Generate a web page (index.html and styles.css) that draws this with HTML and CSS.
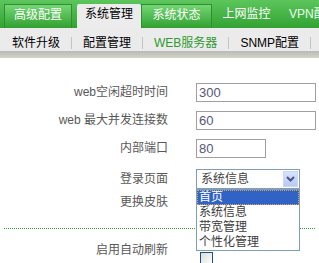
FILE: index.html
```html
<!DOCTYPE html>
<html lang="zh-CN">
<head>
    <meta charset="UTF-8">
    <title>系统管理 - WEB服务器</title>
    <link rel="stylesheet" href="styles.css">
</head>
<body>
    <div class="topnav">
        <a class="tab tab-box tab-first">高级配置</a>
        <a class="tab tab-active">系统管理</a>
        <a class="tab tab-box tab-third">系统状态</a>
        <a class="tab tab-fourth">上网监控</a>
        <span class="tab-sep"></span>
        <a class="tab tab-last">VPN配置</a>
    </div>
    <div class="subnav">
        <a class="sub-item sub-first">软件升级</a>
        <span class="sub-sep"></span>
        <a class="sub-item">配置管理</a>
        <span class="sub-sep"></span>
        <a class="sub-item sub-active">WEB服务器</a>
        <span class="sub-sep"></span>
        <a class="sub-item">SNMP配置</a>
        <span class="sub-sep"></span>
    </div>
    <div class="subnav-shadow"></div>

    <form class="settings">
        <div class="row">
            <label class="row-label">web空闲超时时间</label>
            <input class="field field-long" type="text" value="300">
        </div>
        <div class="row">
            <label class="row-label">web 最大并发连接数</label>
            <input class="field field-long" type="text" value="60">
        </div>
        <div class="row">
            <label class="row-label">内部端口</label>
            <input class="field field-short" type="text" value="80">
        </div>
        <div class="row row-select">
            <label class="row-label">登录页面</label>
            <div class="select">
                <span class="select-value">系统信息</span>
                <span class="select-arrow">
                    <svg width="9" height="6" viewBox="0 0 9 6"><path d="M1 1 L4.5 4.5 L8 1" fill="none" stroke="#4a5680" stroke-width="2"/></svg>
                </span>
                <ul class="select-list">
                    <li class="option option-selected">首页</li>
                    <li class="option">系统信息</li>
                    <li class="option">带宽管理</li>
                    <li class="option">个性化管理</li>
                </ul>
            </div>
        </div>
        <div class="row row-skin">
            <label class="row-label">更换皮肤</label>
        </div>
        <div class="divider"></div>
        <div class="row row-check">
            <label class="row-label">启用自动刷新</label>
            <span class="checkbox"></span>
        </div>
    </form>
</body>
</html>
```

FILE: styles.css
```css
body {
    margin: 0;
    font-family: "Liberation Sans", "Noto Sans CJK SC", sans-serif;
    font-size: 12px;
    background-color: #ffffff;
    overflow: hidden;
}
a {
    text-decoration: none;
}
.topnav {
    display: flex;
    align-items: flex-end;
    height: 28px;
    padding-left: 4px;
    background: linear-gradient(#5cc65c, #32a232);
    overflow: hidden;
}
.tab {
    flex: none;
    box-sizing: border-box;
    height: 24px;
    line-height: 20px;
    padding-bottom: 4px;
    color: #ffffff;
    text-align: center;
    white-space: nowrap;
}
.tab-box {
    background: linear-gradient(#74d674, #30a030);
    border: 1px solid #2f8f2f;
    border-bottom: none;
}
.tab-first {
    width: 68px;
}
.tab-active {
    width: 64px;
    margin-left: 5px;
    background-color: #ececec;
    color: #000000;
    border-radius: 2px 2px 0 0;
}
.tab-third {
    width: 71px;
}
.tab-fourth {
    width: 67px;
    margin-left: 1px;
}
.tab-sep {
    align-self: center;
    width: 1px;
    height: 17px;
    margin-top: 4px;
    background-color: #9ddc9d;
}
.tab-last {
    padding-left: 9px;
    color: #eaffea;
}
.subnav {
    display: flex;
    align-items: center;
    box-sizing: border-box;
    height: 23px;
    padding-top: 6px;
    background-color: #ebebeb;
}
.sub-item {
    padding: 0 11px;
    line-height: 14px;
    color: #000000;
}
.sub-first {
    padding-left: 12px;
}
.sub-active {
    color: #2f9a2f;
}
.sub-sep {
    width: 1px;
    height: 12px;
    background-color: #c4c4c4;
}
.subnav-shadow {
    height: 7px;
    background: linear-gradient(#b9b9b9, #d2d6c4);
}
.settings {
    margin: 0;
    padding-top: 20px;
}
.row {
    display: flex;
    align-items: center;
    height: 28px;
    gap: 28px;
}
.row-label {
    flex: none;
    width: 168px;
    text-align: right;
    color: #585858;
    line-height: 14px;
}
.field {
    box-sizing: border-box;
    height: 19px;
    padding: 0 2px;
    border: 1px solid #a0a0a0;
    font-family: "Liberation Sans", sans-serif;
    font-size: 13px;
    color: #56567a;
    outline: none;
}
.field-long {
    width: 120px;
}
.field-short {
    width: 70px;
}
.row-select {
    height: 30px;
    margin-top: 2px;
}
.select {
    position: relative;
    display: flex;
    align-items: center;
    justify-content: space-between;
    box-sizing: border-box;
    width: 104px;
    height: 20px;
    padding: 0 1px 0 4px;
    border: 1px solid #7f9db9;
    background-color: #ffffff;
}
.select-value {
    color: #444444;
    line-height: 14px;
}
.select-arrow {
    display: flex;
    align-items: center;
    justify-content: center;
    box-sizing: border-box;
    width: 15px;
    height: 16px;
    background: linear-gradient(#d6e2fd, #b7caf6);
    border: 1px solid #c9d6f6;
}
.select-list {
    position: absolute;
    top: 19px;
    left: -1px;
    width: 104px;
    box-sizing: border-box;
    margin: 0;
    padding: 0;
    list-style: none;
    border: 1px solid #7f9db9;
    background-color: #ffffff;
    z-index: 2;
}
.option {
    height: 15px;
    line-height: 15px;
    padding-left: 2px;
    color: #3c3c3c;
}
.option-selected {
    background-color: #3163c6;
    color: #ffffff;
    outline: 1px dotted #d6a35c;
    outline-offset: -1px;
}
.row-skin {
    height: 16px;
}
.divider {
    margin: 18px 4px 0;
    border-top: 1px dotted #2f9a2f;
}
.row-check {
    margin-top: 7px;
}
.checkbox {
    align-self: flex-end;
    width: 13px;
    height: 13px;
    box-sizing: border-box;
    margin-left: 4px;
    margin-bottom: -1px;
    border: 1px solid #1c5180;
    background: linear-gradient(135deg, #dcdcd7, #ffffff);
}
```
